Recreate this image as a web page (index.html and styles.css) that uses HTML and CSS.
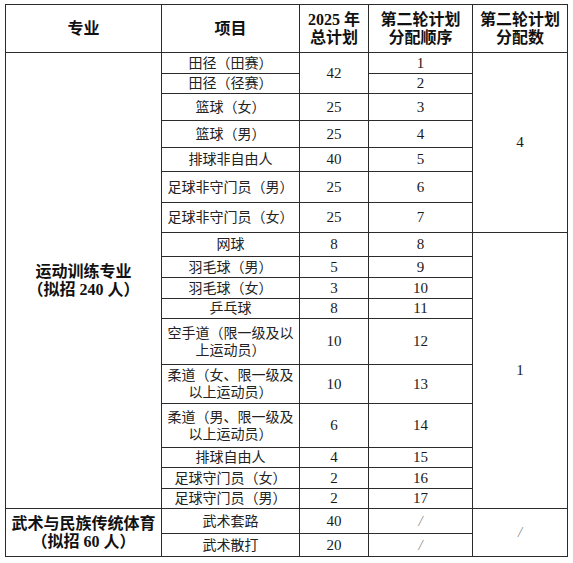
FILE: index.html
```html
<!DOCTYPE html>
<html lang="zh-CN">
<head>
<meta charset="utf-8">
<title>第二轮计划分配</title>
<link rel="stylesheet" href="styles.css">
</head>
<body>
<table class="plan">
  <colgroup>
    <col class="c1"><col class="c2"><col class="c3"><col class="c4"><col class="c5">
  </colgroup>
  <thead>
    <tr class="h48">
      <th>专业</th>
      <th>项目</th>
      <th>2025 年<br>总计划</th>
      <th>第二轮计划<br>分配顺序</th>
      <th>第二轮计划<br>分配数</th>
    </tr>
  </thead>
  <tbody>
    <tr class="h21">
      <td rowspan="17" class="major">运动训练专业<br>（拟招 240 人）</td>
      <td>田径（田赛）</td>
      <td rowspan="2" class="num">42</td>
      <td class="num">1</td>
      <td rowspan="7" class="num">4</td>
    </tr>
    <tr class="h20"><td>田径（径赛）</td><td class="num">2</td></tr>
    <tr class="h27"><td>篮球（女）</td><td class="num">25</td><td class="num">3</td></tr>
    <tr class="h27"><td>篮球（男）</td><td class="num">25</td><td class="num">4</td></tr>
    <tr class="h24"><td>排球非自由人</td><td class="num">40</td><td class="num">5</td></tr>
    <tr class="h31"><td>足球非守门员（男）</td><td class="num">25</td><td class="num">6</td></tr>
    <tr class="h30"><td>足球非守门员（女）</td><td class="num">25</td><td class="num">7</td></tr>
    <tr class="h24">
      <td>网球</td><td class="num">8</td><td class="num">8</td>
      <td rowspan="10" class="num">1</td>
    </tr>
    <tr class="h21"><td>羽毛球（男）</td><td class="num">5</td><td class="num">9</td></tr>
    <tr class="h21"><td>羽毛球（女）</td><td class="num">3</td><td class="num">10</td></tr>
    <tr class="h20"><td>乒乓球</td><td class="num">8</td><td class="num">11</td></tr>
    <tr class="h46"><td>空手道（限一级及以<br>上运动员）</td><td class="num">10</td><td class="num">12</td></tr>
    <tr class="h39"><td>柔道（女、限一级及<br>以上运动员）</td><td class="num">10</td><td class="num">13</td></tr>
    <tr class="h44"><td>柔道（男、限一级及<br>以上运动员）</td><td class="num">6</td><td class="num">14</td></tr>
    <tr class="h20"><td>排球自由人</td><td class="num">4</td><td class="num">15</td></tr>
    <tr class="h21"><td>足球守门员（女）</td><td class="num">2</td><td class="num">16</td></tr>
    <tr class="h20"><td>足球守门员（男）</td><td class="num">2</td><td class="num">17</td></tr>
    <tr class="h25">
      <td rowspan="2" class="major">武术与民族传统体育<br>（拟招 60 人）</td>
      <td>武术套路</td><td class="num">40</td><td class="slash">/</td>
      <td rowspan="2" class="slash">/</td>
    </tr>
    <tr class="h23"><td>武术散打</td><td class="num">20</td><td class="slash">/</td></tr>
  </tbody>
</table>
</body>
</html>
```
FILE: styles.css
```css
html, body {
  margin: 0;
  padding: 0;
  background: #ffffff;
}

body {
  padding: 4px 0 0 5px;
}

.plan {
  border-collapse: collapse;
  table-layout: fixed;
  width: 562px;
  font-family: "Liberation Serif", "Noto Sans CJK SC", serif;
  color: #1a1a1a;
}

.c1 { width: 156px; }
.c2 { width: 138px; }
.c3 { width: 69px; }
.c4 { width: 104px; }
.c5 { width: 95px; }

.plan th,
.plan td {
  border: 1px solid #2b2b2b;
  padding: 0;
  text-align: center;
  vertical-align: middle;
  overflow: hidden;
}

.plan th {
  font-size: 16px;
  font-weight: bold;
  line-height: 18px;
  color: #111;
}

.plan td {
  font-size: 14px;
  line-height: 17px;
  color: #222;
}

.plan td.num {
  font-size: 15px;
  color: #1a1a1a;
}

.plan td.major {
  font-size: 16px;
  font-weight: bold;
  line-height: 18px;
  color: #111;
}

.plan td.slash {
  font-size: 15px;
  color: #8a8a8a;
  font-style: italic;
}

.h20 { height: 20px; }
.h21 { height: 21px; }
.h23 { height: 23px; }
.h24 { height: 24px; }
.h25 { height: 25px; }
.h27 { height: 27px; }
.h30 { height: 30px; }
.h31 { height: 31px; }
.h39 { height: 39px; }
.h44 { height: 44px; }
.h46 { height: 46px; }
.h48 { height: 48px; }
```
